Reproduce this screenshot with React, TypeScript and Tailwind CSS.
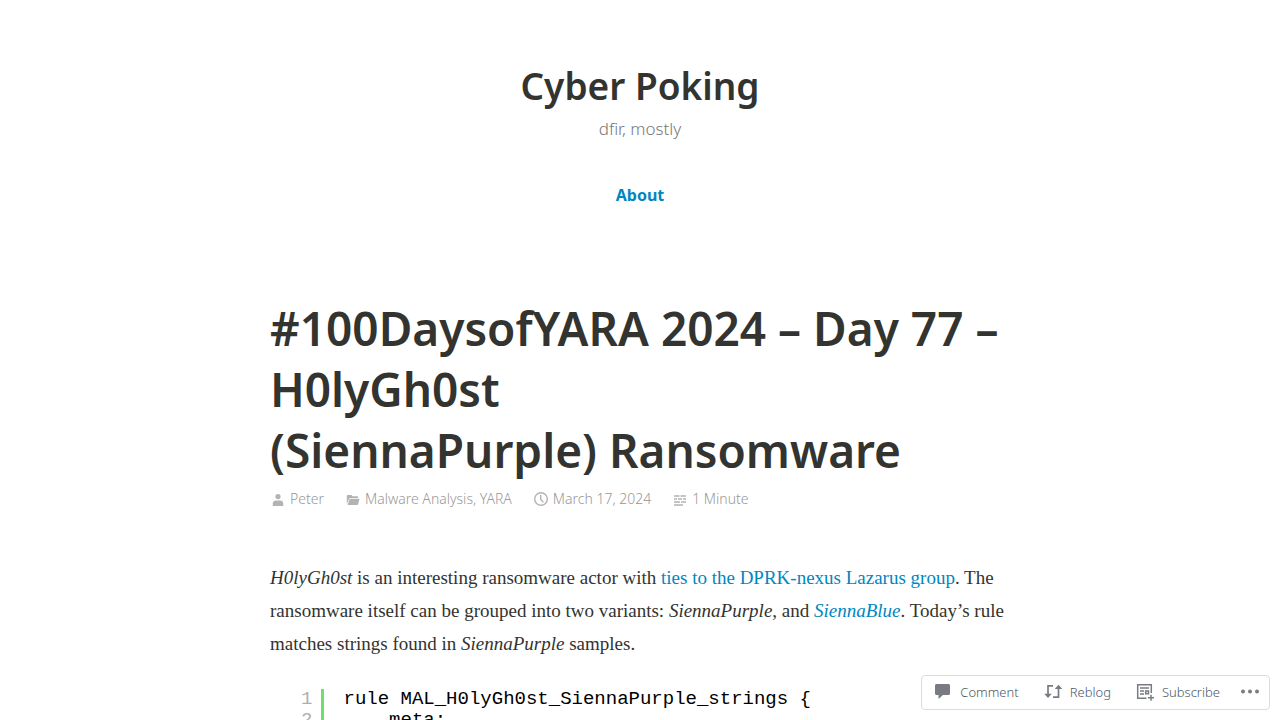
import React from 'react';

const codeLines = ['rule MAL_H0lyGh0st_SiennaPurple_strings {', '    meta:'];

const linkClass = 'text-[#0087be] hover:text-[#33332f]';

function UserIcon() {
    return (
        <svg className="w-4 h-4 mt-[2px] text-[#b3b3b1]" viewBox="0 0 16 16" fill="currentColor" aria-hidden="true">
            <circle cx="8" cy="4.6" r="2.6" />
            <path d="M2.800 14v-2.400c0-1.900 1.300-3.100 3-3.100h4.400c1.700 0 3 1.200 3 3.100V14z" />
        </svg>
    );
}

function FolderIcon() {
    return (
        <svg className="w-4 h-4 mt-[2px] text-[#b3b3b1]" viewBox="0 0 16 16" fill="currentColor" aria-hidden="true">
            <path d="M1.800 12.200V4.200c0-.7.5-1.200 1.200-1.200h3c.7 0 1 .4 1.300 1.200h4.700c.7 0 1.200.5 1.200 1.200v.8H5.300c-.7 0-1.200.3-1.500 1z" />
            <path d="M5.400 7h9.100l-1.300 5c-.2.700-.6 1-1.300 1H2.600l1.700-5.200c.2-.5.500-.8 1.100-.8z" />
        </svg>
    );
}

function ClockIcon() {
    return (
        <svg className="w-4 h-4 text-[#b3b3b1]" viewBox="0 0 16 16" fill="none" stroke="currentColor" strokeWidth="1.4" aria-hidden="true">
            <circle cx="8" cy="8" r="6.300" />
            <path d="M7.700 4v4.200l2.600 3" />
        </svg>
    );
}

function SummaryIcon() {
    return (
        <svg className="w-4 h-4 text-[#b3b3b1]" viewBox="0 0 16 16" stroke="currentColor" strokeWidth="1.400" aria-hidden="true">
            <path d="M2 5h5.500M8.500 5h5.500M2 8h3M6 8h4M11 8h3M2 11h6M9 11h5M2 14h9" />
        </svg>
    );
}

function CommentIcon() {
    return (
        <svg className="w-5 h-5 text-[#787c82]" viewBox="0 0 20 20" fill="currentColor" aria-hidden="true">
            <path d="M3.500 2h12c.8 0 1.500.7 1.500 1.500v8c0 .8-.7 1.500-1.500 1.500H10L5.500 17V13h-2c-.8 0-1.500-.7-1.500-1.500v-8C2 2.700 2.700 2 3.500 2z" />
        </svg>
    );
}

function ReblogIcon() {
    return (
        <svg className="w-5 h-5 text-[#787c82]" viewBox="0 0 20 20" fill="none" stroke="currentColor" strokeWidth="1.700" aria-hidden="true">
            <path d="M10 3.800H5V14M10 15.200h5.500V5.500" />
            <path d="M1.200 11.800h7.600L5 16zM11.700 7h7.600L15.500 2.800z" fill="currentColor" stroke="none" />
        </svg>
    );
}

function SubscribeIcon() {
    return (
        <svg className="w-5 h-5 text-[#787c82]" viewBox="0 0 20 20" fill="none" stroke="currentColor" strokeWidth="1.500" aria-hidden="true">
            <path d="M11.500 16.200H2.700V2.700h13.600V11" />
            <path d="M5 6h9M5 9h4M5 12h4M10.700 9h2.800v2.700h-2.800zM16 12.700v6M13 15.700h6" />
        </svg>
    );
}

function DotsIcon() {
    return (
        <svg className="w-5 h-5 text-[#787c82]" viewBox="0 0 20 20" fill="currentColor" aria-hidden="true">
            <circle cx="3" cy="9.500" r="2" />
            <circle cx="10" cy="9.500" r="2" />
            <circle cx="17" cy="9.500" r="2" />
        </svg>
    );
}

function ActionBar() {
    return (
        <div className="fixed bottom-[10px] right-[10px] h-[35px] pl-[11px] pr-[9px] pb-px flex items-center gap-6 bg-white border border-[#dcdcde] rounded-sm text-[13px] leading-5 font-light text-[#50575e]">
            <button type="button" className="flex items-center gap-[7px]"><CommentIcon />Comment</button>
            <button type="button" className="flex items-center gap-[7px]"><ReblogIcon />Reblog</button>
            <button type="button" className="flex items-center gap-[7px]"><SubscribeIcon />Subscribe</button>
            <button type="button" aria-label="More" className="-ml-1"><DotsIcon /></button>
        </div>
    );
}

export default function App() {
    return (
        <div className="h-screen overflow-hidden bg-white text-[#33332f] font-['Noto_Sans',sans-serif]">
            <header className="pt-[59px] text-center">
                <h1 className="text-[37px] leading-[54px] font-semibold"><a href="#home">Cyber Poking</a></h1>
                <p className="mt-px text-[17px] leading-[30px] font-light text-[#777]">dfir, mostly</p>
                <nav className="mt-9 text-base leading-[30px] font-bold">
                    <a href="#about" className={linkClass}>About</a>
                </nav>
            </header>

            <main className="mx-auto mt-[88px] max-w-[740px]">
                <article>
                    <h2 className="text-[46px] leading-[61px] font-semibold">
                        #100DaysofYARA 2024 – Day 77 – H0lyGh0st (SiennaPurple)&nbsp;Ransomware
                    </h2>
                    <div className="mt-[6px] flex items-center gap-[21px] text-sm leading-6 font-light text-[#999997]">
                        <a href="#peter" className="flex items-center gap-1"><UserIcon />Peter</a>
                        <span className="flex items-center gap-1">
                            <FolderIcon />
                            <span><a href="#malware-analysis">Malware Analysis</a>, <a href="#yara">YARA</a></span>
                        </span>
                        <a href="#date" className="flex items-center gap-1"><ClockIcon />March 17, 2024</a>
                        <span className="flex items-center gap-1"><SummaryIcon />1 Minute</span>
                    </div>

                    <p className="mt-[50px] text-[19px] leading-[33px] font-['Liberation_Serif',serif]">
                        <em>H0lyGh0st</em> is an interesting ransomware actor with{' '}
                        <a href="#lazarus" className={linkClass}>ties to the DPRK-nexus Lazarus group</a>. The ransomware
                        itself can be grouped into two variants: <em>SiennaPurple</em>, and{' '}
                        <a href="#siennablue" className={linkClass}><em>SiennaBlue</em></a>. Today’s rule matches strings
                        found in <em>SiennaPurple</em> samples.
                    </p>

                    <table className="mt-[29px] text-[19px] leading-[21px] font-['Liberation_Mono',monospace]">
                        <tbody>
                            {codeLines.map((line, i) => (
                                <tr key={i}>
                                    <td className="w-[52px] p-0 pr-2 text-right text-[#afafaf] border-r-[3px] border-[#6ce26c]">{i + 1}</td>
                                    <td className="p-0 pl-5 whitespace-pre text-black">{line}</td>
                                </tr>
                            ))}
                        </tbody>
                    </table>
                </article>
            </main>

            <ActionBar />
        </div>
    );
}
